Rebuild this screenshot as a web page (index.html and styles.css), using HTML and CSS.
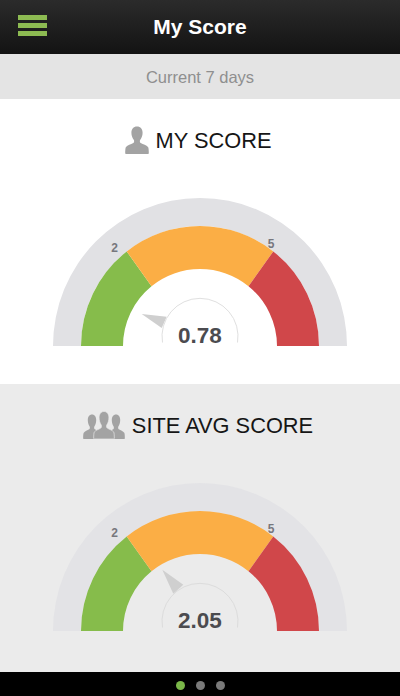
FILE: index.html
```html
<!DOCTYPE html>
<html lang="en">
<head>
<meta charset="utf-8">
<title>My Score</title>
<link rel="stylesheet" href="styles.css">
</head>
<body>
<div class="app">
  <header class="topbar">
    <div class="menu"><span></span><span></span><span></span></div>
    <h1>My Score</h1>
  </header>
  <div class="period">Current 7 days</div>
  <section class="panel panel-white">
    <h2 class="heading">
      <svg class="icon-person" viewBox="0 0 24 28"><path d="M12 .5c3.600 0 5.600 2.600 5.600 6.300 0 2.700-.9 5.200-2.300 7-.7 1-.6 2.700.4 3.300 2.500 1.300 5.800 2.200 7.300 3.800.6.700.8 3.300.8 6.300a.8.8 0 0 1-.8.8H1a.8.8 0 0 1-.8-.8c0-3 .2-5.600.8-6.300 1.500-1.600 4.800-2.500 7.300-3.800 1-.6 1.100-2.300.4-3.300-1.400-1.800-2.300-4.300-2.300-7C6.400 3.100 8.400.5 12 .5z"/></svg>
      <span class="label">MY SCORE</span>
    </h2>
    <svg class="gauge" viewBox="0 0 320 160">
      <path class="track" d="M13 156A147 148 0 0 1 307 156H279A119 120 0 0 0 41 156Z"/>
      <path class="green" d="M41 156A119 120 0 0 1 86.700 61.400L111.500 96.200A77 77 0 0 0 83 156Z"/>
      <path class="orange" d="M86.700 61.400A119 120 0 0 1 233.300 61.400L208.500 96.200A77 77 0 0 0 111.500 96.200Z"/>
      <path class="red" d="M233.300 61.400A119 120 0 0 1 279 156H237A77 77 0 0 0 208.500 96.200Z"/>
      <path class="needle" d="M101.700 124L126.700 126.700L121.700 138Z"/>
      <path class="hub" d="M122.500 152.500A38 38 0 1 1 197.500 152.500"/>
      <text class="tick" x="74.500" y="62">2</text>
      <text class="tick" x="231" y="58">5</text>
      <text class="value" x="160" y="152.500">0.78</text>
    </svg>
  </section>
  <section class="panel panel-grey">
    <h2 class="heading">
      <svg class="icon-group" viewBox="0 0 42 28">
        <defs><path id="figure" d="M12 .5c3.600 0 5.600 2.600 5.600 6.300 0 2.700-.9 5.200-2.300 7-.7 1-.6 2.700.4 3.300 2.500 1.300 5.800 2.200 7.300 3.800.6.700.8 3.300.8 6.300a.8.8 0 0 1-.8.8H1a.8.8 0 0 1-.8-.8c0-3 .2-5.600.8-6.300 1.500-1.600 4.800-2.500 7.300-3.800 1-.6 1.100-2.300.4-3.300-1.400-1.800-2.300-4.300-2.300-7C6.400 3.100 8.400.5 12 .5z"/></defs>
        <use href="#figure" transform="translate(0 3) scale(.75 .893)"/>
        <use href="#figure" transform="translate(24 3) scale(.75 .893)"/>
        <use class="figure-front" href="#figure" transform="translate(10.500 0) scale(.875 1)"/>
      </svg>
      <span class="label">SITE AVG SCORE</span>
    </h2>
    <svg class="gauge" viewBox="0 0 320 160">
      <path class="track" d="M13 156A147 148 0 0 1 307 156H279A119 120 0 0 0 41 156Z"/>
      <path class="green" d="M41 156A119 120 0 0 1 86.700 61.400L111.500 96.200A77 77 0 0 0 83 156Z"/>
      <path class="orange" d="M86.700 61.400A119 120 0 0 1 233.300 61.400L208.500 96.200A77 77 0 0 0 111.500 96.200Z"/>
      <path class="red" d="M233.300 61.400A119 120 0 0 1 279 156H237A77 77 0 0 0 208.500 96.200Z"/>
      <path class="needle" d="M122.300 94.800L143.300 109.800L133.300 118.800Z"/>
      <path class="hub" d="M122.500 152.500A38 38 0 1 1 197.500 152.500"/>
      <text class="tick" x="74.500" y="62">2</text>
      <text class="tick" x="231" y="58">5</text>
      <text class="value" x="160" y="152.500">2.05</text>
    </svg>
  </section>
  <footer class="pager">
    <span class="dot dot-on"></span><span class="dot"></span><span class="dot"></span>
  </footer>
</div>
</body>
</html>
```
FILE: styles.css
```css
* { box-sizing: border-box; }
html, body { margin: 0; padding: 0; }
body { font-family: "Liberation Sans", Arial, sans-serif; background: #000; }
.app { width: 400px; height: 696px; display: flex; flex-direction: column; overflow: hidden; }

.topbar {
  height: 54px;
  flex: none;
  display: grid;
  grid-template-columns: 29px 1fr 29px;
  align-items: center;
  padding: 0 18px;
  background: linear-gradient(#2b2b2b, #131313);
}
.topbar h1 { margin: 0; font-size: 21px; font-weight: 700; color: #fff; text-align: center; }
.menu { width: 29px; display: flex; flex-direction: column; gap: 3px; margin-top: -4px; }
.menu span { display: block; height: 5px; background: #8dbb52; }

.period {
  height: 45px;
  flex: none;
  display: flex;
  align-items: center;
  justify-content: center;
  padding-top: 1px;
  background: #e4e4e4;
  color: #8f8f8f;
  font-size: 16.500px;
}

.panel { flex: none; padding-top: 21px; }
.panel-white { height: 284.500px; background: #fff; }
.panel-grey { height: 288.500px; background: #ebebeb; }
.heading {
  margin: 0;
  height: 40px;
  display: flex;
  align-items: center;
  justify-content: center;
  gap: 7px;
  padding-right: 4px;
  font-size: 21.800px;
  font-weight: 400;
  color: #161616;
}
.label { padding-top: 2px; }
.icon-person { width: 24px; height: 28px; fill: #a3a3a3; }
.icon-group { width: 42px; height: 28px; fill: #a3a3a3; }
.figure-front { stroke: #ebebeb; stroke-width: .7; }

.gauge { display: block; width: 320px; height: 160px; margin: 30px auto 0; }
.track { fill: #e1e1e4; }
.panel-grey .track { fill: #e3e3e6; }
.green { fill: #86bc4b; }
.orange { fill: #fbae45; }
.red { fill: #d0474a; }
.needle { fill: #cfcfcf; }
.hub { stroke-width: 1; }
.panel-white .hub { fill: #fff; stroke: #e0e0e0; }
.panel-grey .hub { fill: #ebebeb; stroke: #dcdcdc; }
.tick { font-size: 12px; font-weight: 700; fill: #77777d; text-anchor: middle; }
.value { font-size: 22.500px; font-weight: 700; fill: #4b4b4f; text-anchor: middle; }

.pager {
  flex: 1;
  display: flex;
  align-items: center;
  justify-content: center;
  gap: 11px;
  background: #000;
  padding-top: 2px;
}
.dot { width: 9px; height: 9px; border-radius: 50%; background: #7a7a7a; }
.dot-on { background: #7ab648; }
```
